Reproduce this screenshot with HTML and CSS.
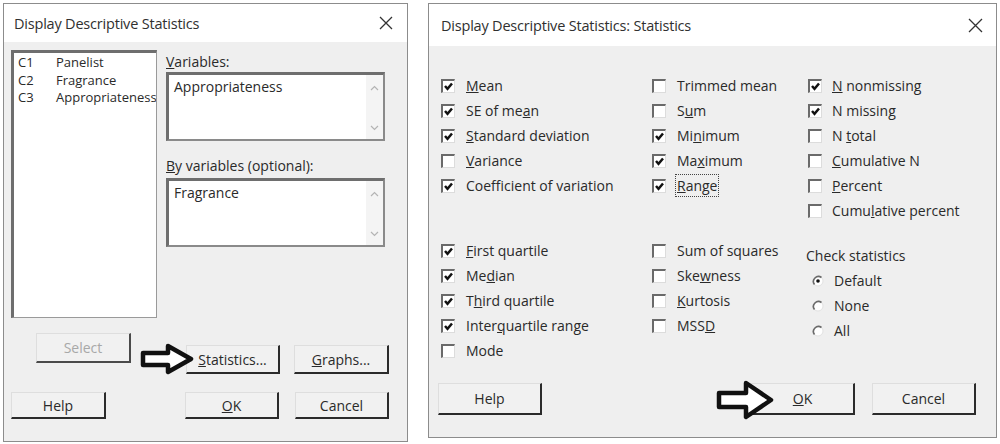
FILE: index.html
```html
<!DOCTYPE html>
<html lang="en">
<head>
    <meta charset="UTF-8">
    <meta name="viewport" content="width=device-width, initial-scale=1.0">
    <title>Display Descriptive Statistics</title>
    <link rel="stylesheet" href="styles.css">
</head>
<body>
    <div class="screen">
        <!-- main dialog -->
        <div class="dialog dialog-main">
            <div class="titlebar">
                <span class="title">Display Descriptive Statistics</span>
                <svg class="close" width="14" height="14" viewBox="0 0 14 14"><path d="M1 1 L13 13 M13 1 L1 13"/></svg>
            </div>
            <div class="main-body">
                <div class="top-area">
                    <div class="listbox">
                        <div class="list-row"><span class="cid">C1</span><span>Panelist</span></div>
                        <div class="list-row"><span class="cid">C2</span><span>Fragrance</span></div>
                        <div class="list-row"><span class="cid">C3</span><span>Appropriateness</span></div>
                    </div>
                    <div class="fields">
                        <div class="field-label"><u>V</u>ariables:</div>
                        <div class="textbox">
                            <span class="textbox-text">Appropriateness</span>
                            <div class="scroll">
                                <svg width="9" height="6" viewBox="0 0 9 6"><path d="M1 5 L4.5 1.5 L8 5"/></svg>
                                <svg width="9" height="6" viewBox="0 0 9 6"><path d="M1 1 L4.5 4.5 L8 1"/></svg>
                            </div>
                        </div>
                        <div class="field-label second"><u>B</u>y variables (optional):</div>
                        <div class="textbox">
                            <span class="textbox-text">Fragrance</span>
                            <div class="scroll">
                                <svg width="9" height="6" viewBox="0 0 9 6"><path d="M1 5 L4.5 1.5 L8 5"/></svg>
                                <svg width="9" height="6" viewBox="0 0 9 6"><path d="M1 1 L4.5 4.5 L8 1"/></svg>
                            </div>
                        </div>
                    </div>
                </div>
                <div class="btn-row row-one">
                    <div class="btn btn-select disabled">Select</div>
                    <div class="btn btn-stats"><span><u>S</u>tatistics...</span></div>
                    <div class="btn btn-graphs"><span><u>G</u>raphs...</span></div>
                </div>
                <div class="btn-row row-two">
                    <div class="btn btn-help">Help</div>
                    <div class="btn btn-ok"><span><u>O</u>K</span></div>
                    <div class="btn btn-cancel">Cancel</div>
                </div>
            </div>
            <svg class="pointer pointer-stats" width="54" height="32" viewBox="0 0 54 32"><path d="M3 10 H28 V3 L51 16 L28 29 V22 H3 Z"/></svg>
        </div>

        <!-- statistics sub dialog -->
        <div class="dialog dialog-stats">
            <div class="titlebar tall">
                <span class="title">Display Descriptive Statistics: Statistics</span>
                <svg class="close" width="15" height="15" viewBox="0 0 15 15"><path d="M1 1 L14 14 M14 1 L1 14"/></svg>
            </div>
            <div class="stats-body">
                <div class="columns">
                    <div class="col col-a">
                        <div class="group">
                            <div class="opt"><span class="cb on"><svg viewBox="0 0 11 11"><path d="M2 5 L4.5 7.8 L9 2.5"/></svg></span><span><u>M</u>ean</span></div>
                            <div class="opt"><span class="cb on"><svg viewBox="0 0 11 11"><path d="M2 5 L4.5 7.8 L9 2.5"/></svg></span><span>SE of me<u>a</u>n</span></div>
                            <div class="opt"><span class="cb on"><svg viewBox="0 0 11 11"><path d="M2 5 L4.5 7.8 L9 2.5"/></svg></span><span><u>S</u>tandard deviation</span></div>
                            <div class="opt"><span class="cb"></span><span><u>V</u>ariance</span></div>
                            <div class="opt"><span class="cb on"><svg viewBox="0 0 11 11"><path d="M2 5 L4.5 7.8 L9 2.5"/></svg></span><span>Coefficient of variation</span></div>
                        </div>
                        <div class="group lower">
                            <div class="opt"><span class="cb on"><svg viewBox="0 0 11 11"><path d="M2 5 L4.5 7.8 L9 2.5"/></svg></span><span><u>F</u>irst quartile</span></div>
                            <div class="opt"><span class="cb on"><svg viewBox="0 0 11 11"><path d="M2 5 L4.5 7.8 L9 2.5"/></svg></span><span>Me<u>d</u>ian</span></div>
                            <div class="opt"><span class="cb on"><svg viewBox="0 0 11 11"><path d="M2 5 L4.5 7.8 L9 2.5"/></svg></span><span>T<u>h</u>ird quartile</span></div>
                            <div class="opt"><span class="cb on"><svg viewBox="0 0 11 11"><path d="M2 5 L4.5 7.8 L9 2.5"/></svg></span><span>Inter<u>q</u>uartile range</span></div>
                            <div class="opt"><span class="cb"></span><span>Mode</span></div>
                        </div>
                    </div>
                    <div class="col col-b">
                        <div class="group">
                            <div class="opt"><span class="cb"></span><span>Trimmed mean</span></div>
                            <div class="opt"><span class="cb"></span><span>S<u>u</u>m</span></div>
                            <div class="opt"><span class="cb on"><svg viewBox="0 0 11 11"><path d="M2 5 L4.5 7.8 L9 2.5"/></svg></span><span>Mi<u>n</u>imum</span></div>
                            <div class="opt"><span class="cb on"><svg viewBox="0 0 11 11"><path d="M2 5 L4.5 7.8 L9 2.5"/></svg></span><span>Ma<u>x</u>imum</span></div>
                            <div class="opt"><span class="cb on"><svg viewBox="0 0 11 11"><path d="M2 5 L4.5 7.8 L9 2.5"/></svg></span><span class="focus"><u>R</u>ange</span></div>
                        </div>
                        <div class="group lower">
                            <div class="opt"><span class="cb"></span><span>Sum of squares</span></div>
                            <div class="opt"><span class="cb"></span><span>Ske<u>w</u>ness</span></div>
                            <div class="opt"><span class="cb"></span><span><u>K</u>urtosis</span></div>
                            <div class="opt"><span class="cb"></span><span>MSS<u>D</u></span></div>
                        </div>
                    </div>
                    <div class="col col-c">
                        <div class="group">
                            <div class="opt"><span class="cb on"><svg viewBox="0 0 11 11"><path d="M2 5 L4.5 7.8 L9 2.5"/></svg></span><span><u>N</u> nonmissing</span></div>
                            <div class="opt"><span class="cb on"><svg viewBox="0 0 11 11"><path d="M2 5 L4.5 7.8 L9 2.5"/></svg></span><span>N missin<u>g</u></span></div>
                            <div class="opt"><span class="cb"></span><span>N <u>t</u>otal</span></div>
                            <div class="opt"><span class="cb"></span><span><u>C</u>umulative N</span></div>
                            <div class="opt"><span class="cb"></span><span><u>P</u>ercent</span></div>
                            <div class="opt"><span class="cb"></span><span>Cumu<u>l</u>ative percent</span></div>
                        </div>
                        <div class="group check-group">
                            <div class="group-label">Check statistics</div>
                            <div class="opt radio-opt"><svg class="radio" width="12" height="12" viewBox="0 0 12 12"><circle class="ring" cx="6" cy="6" r="5"/><path class="shade" d="M2.5 9.5 A5 5 0 0 1 9.5 2.5"/><circle class="dot" cx="6" cy="6" r="1.8"/></svg><span>Default</span></div>
                            <div class="opt radio-opt"><svg class="radio" width="12" height="12" viewBox="0 0 12 12"><circle class="ring" cx="6" cy="6" r="5"/><path class="shade" d="M2.5 9.5 A5 5 0 0 1 9.5 2.5"/></svg><span>None</span></div>
                            <div class="opt radio-opt"><svg class="radio" width="12" height="12" viewBox="0 0 12 12"><circle class="ring" cx="6" cy="6" r="5"/><path class="shade" d="M2.5 9.5 A5 5 0 0 1 9.5 2.5"/></svg><span>All</span></div>
                        </div>
                    </div>
                </div>
                <div class="stats-buttons">
                    <div class="btn btn-big">Help</div>
                    <div class="spacer"></div>
                    <div class="btn btn-big"><span><u>O</u>K</span></div>
                    <div class="btn btn-big">Cancel</div>
                </div>
            </div>
            <svg class="pointer pointer-ok" width="58" height="40" viewBox="0 0 58 40"><path d="M3 13 H30 V3 L55 20 L30 37 V27 H3 Z"/></svg>
        </div>
    </div>
</body>
</html>
```

FILE: styles.css
```css
body {
    margin: 0;
    background: #ffffff;
    font-family: "Open Sans", "Noto Sans", Arial, sans-serif;
    font-size: 14px;
    color: #2a2a2a;
}
.screen {
    display: flex;
    gap: 20px;
    padding: 3px 0 0 3px;
}
.dialog {
    position: relative;
    box-sizing: border-box;
    border: 1px solid #8c8c8c;
    background: #efefef;
}
.dialog-main {
    width: 405px;
    height: 439px;
}
.dialog-stats {
    width: 569px;
    height: 435px;
}
.titlebar {
    display: flex;
    align-items: center;
    justify-content: space-between;
    height: 38px;
    padding: 0 14px 0 10px;
    background: #ffffff;
}
.titlebar.tall {
    height: 42px;
    padding: 0 13px 0 12px;
}
.title {
    font-size: 14.5px;
    letter-spacing: -0.2px;
    color: #303030;
}
.close path {
    stroke: #333;
    stroke-width: 1.3;
    fill: none;
}

/* main dialog */
.main-body {
    padding: 8px 0 0 7px;
}
.top-area {
    display: flex;
}
.listbox {
    box-sizing: border-box;
    width: 146px;
    height: 268px;
    padding: 1px 0 0 4px;
    background: #ffffff;
    border-left: 3px solid #6e6e6e;
    border-top: 3px solid #6e6e6e;
    border-right: 1px solid #9a9a9a;
    border-bottom: 1px solid #9a9a9a;
    overflow: hidden;
}
.list-row {
    display: flex;
    font-size: 13px;
    line-height: 17.5px;
    white-space: nowrap;
}
.cid {
    width: 38px;
    flex: none;
}
.fields {
    width: 219px;
    margin-left: 9px;
    padding-top: 3px;
}
.field-label {
    line-height: 18px;
    margin-bottom: 1px;
}
.field-label.second {
    margin-top: 16px;
    margin-bottom: 3px;
}
.textbox {
    display: flex;
    justify-content: space-between;
    box-sizing: border-box;
    height: 69px;
    background: #ffffff;
    border-left: 3px solid #6e6e6e;
    border-top: 3px solid #6e6e6e;
    border-right: 2px solid #8a8a8a;
    border-bottom: 2px solid #8a8a8a;
}
.textbox-text {
    padding: 2px 0 0 5px;
}
.scroll {
    display: flex;
    flex-direction: column;
    justify-content: space-between;
    align-items: center;
    width: 17px;
    padding: 10px 0 8px;
    background: #f4f4f4;
}
.scroll path {
    stroke: #b4b4b4;
    stroke-width: 1.2;
    fill: none;
}
.btn-row {
    display: flex;
    align-items: flex-start;
}
.btn {
    display: flex;
    align-items: center;
    justify-content: center;
    box-sizing: border-box;
    background: #f1f1f1;
    border-top: 1px solid #dedede;
    border-left: 1px solid #dedede;
    border-right: 2px solid #2b2b2b;
    border-bottom: 2px solid #2b2b2b;
    color: #2a2a2a;
}
.btn.disabled {
    color: #a8a8a8;
    border-right-color: #4a4a4a;
    border-bottom-color: #4a4a4a;
}
.row-one {
    margin-top: 15px;
    padding-left: 25px;
}
.btn-select {
    width: 95px;
    height: 30px;
}
.btn-stats {
    width: 94px;
    height: 29px;
    margin: 12px 0 0 55px;
}
.btn-graphs {
    width: 95px;
    height: 29px;
    margin: 12px 0 0 14px;
}
.row-two {
    margin-top: 18px;
}
.btn-help {
    width: 95px;
    height: 27px;
}
.btn-ok {
    width: 94px;
    height: 27px;
    margin-left: 79px;
}
.btn-cancel {
    width: 94px;
    height: 27px;
    margin-left: 16px;
}

/* arrows drawn over the screenshot */
.pointer {
    position: absolute;
}
.pointer path {
    fill: #ffffff;
    stroke: #111111;
    stroke-width: 4.5;
    stroke-linejoin: round;
}
.pointer-stats {
    left: 136px;
    top: 339px;
}
.pointer-ok {
    left: 287px;
    top: 376px;
}

/* statistics dialog */
.stats-body {
    padding: 27px 20px 0 12px;
}
.columns {
    display: flex;
    height: 290px;
}
.col-a {
    width: 211px;
}
.col-b {
    width: 156px;
}
.group.lower {
    margin-top: 40px;
}
.check-group {
    margin-top: 20px;
}
.opt {
    display: flex;
    align-items: center;
    gap: 11px;
    height: 25px;
    white-space: nowrap;
}
.col-c .opt {
    gap: 10px;
}
.group-label {
    line-height: 25px;
    margin-left: -2px;
}
.cb {
    display: inline-block;
    box-sizing: border-box;
    width: 14px;
    height: 14px;
    flex: none;
    background: #ffffff;
    border-left: 2px solid #6a6a6a;
    border-top: 2px solid #6a6a6a;
    border-right: 1px solid #dcdcdc;
    border-bottom: 1px solid #dcdcdc;
}
.cb svg {
    display: block;
    width: 11px;
    height: 11px;
}
.cb path {
    fill: none;
    stroke: #111111;
    stroke-width: 2.5;
}
.focus {
    outline: 1px dotted #444;
    outline-offset: 1px;
}
.radio-opt {
    padding-left: 4px;
    gap: 11px;
}
.radio {
    flex: none;
}
.radio .ring {
    fill: #ffffff;
    stroke: #e2e2e2;
    stroke-width: 1;
}
.radio .shade {
    fill: none;
    stroke: #6a6a6a;
    stroke-width: 1.6;
}
.radio .dot {
    fill: #111111;
}
.stats-buttons {
    display: flex;
    gap: 17px;
    margin: 20px 0 0 -3px;
}
.stats-buttons .spacer {
    flex: 1;
}
.btn-big {
    width: 104px;
    height: 32px;
}
```
